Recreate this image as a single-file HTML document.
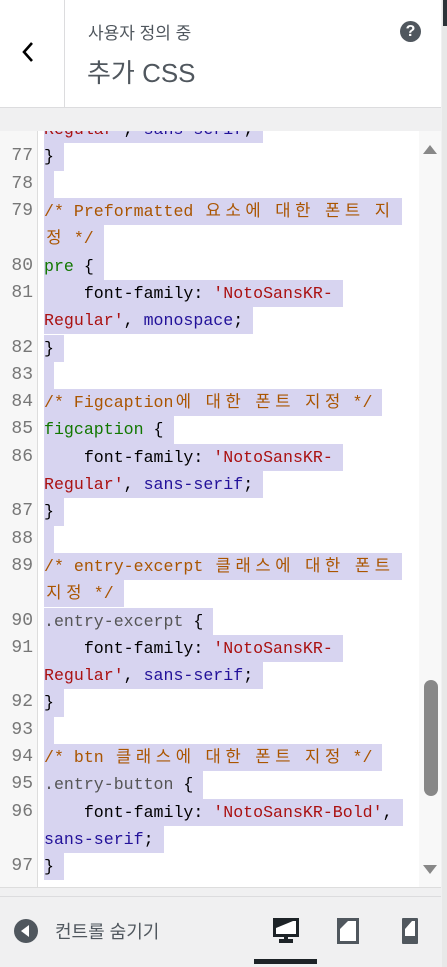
<!DOCTYPE html>
<html><head><meta charset="utf-8"><style>
*{margin:0;padding:0;box-sizing:border-box}
body{width:447px;height:967px;overflow:hidden;background:#f0f0f1;font-family:"Liberation Sans","Noto Sans CJK KR",sans-serif;position:relative}
.hdr{position:absolute;left:0;top:0;width:441px;height:108px;background:#fff;border-bottom:1px solid #dcdcde}
.back{position:absolute;left:0;top:0;width:65px;height:107px;border-right:1px solid #dcdcde}
.sub{position:absolute;left:88px;top:19px;font-size:17px;color:#50575e}
.ttl{position:absolute;left:87px;top:53px;font-size:26px;color:#50575e}
.help{position:absolute;left:400px;top:21px;width:21px;height:21px;border-radius:50%;background:#50575e;color:#fff;font-weight:bold;font-size:16px;text-align:center;line-height:21px}
.rs{position:absolute;left:442px;top:0;width:5px;height:967px;background:#e8e8e8}
.rs:before{content:"";position:absolute;left:1px;top:0;width:4px;height:26px;background:#2c3338}
.code{position:absolute;left:0;top:131px;width:441px;height:757px;background:#fff;overflow:hidden;border-bottom:1px solid #ddd}
.gut{position:absolute;left:0;top:0;width:38px;height:100%;background:#f7f7f7;border-right:1px solid #ddd}
.track{position:absolute;left:419px;top:0;width:22px;height:100%;background:#f8f8f8}
.thumb{position:absolute;left:424px;top:549px;width:14px;height:116px;background:#888;border-radius:7px}
.row{position:absolute;left:0;height:27.3px;width:419px;font-family:"Liberation Mono","Noto Sans CJK KR",monospace;font-size:16.6px;line-height:27.3px;white-space:pre}
.ln{position:absolute;left:0;width:33px;text-align:right;color:#777;font-size:18px}
.tx{position:absolute;left:44px;top:0;height:27.3px;background:#d7d4f0;padding-right:10px}
i{font-style:normal;display:inline-block;width:19.9px;text-align:center}
.c{color:#aa5500}.g{color:#117700}.s{color:#aa1111}.b{color:#221199}.q{color:#555}.k{color:#000}
.bar{position:absolute;left:0;top:896px;width:441px;height:71px;background:#f0f0f1;border-top:1px solid #dcdcde}
.hide{position:absolute;left:55px;top:21px;font-size:18px;color:#50575e}
</style></head><body>
<div class="hdr">
 <div class="back"><svg width="65" height="107"><path d="M32 43 L24 52 L32 61" fill="none" stroke="#000" stroke-width="2.6"/></svg></div>
 <div class="sub">사용자 정의 중</div>
 <div class="ttl">추가 CSS</div>
 <div class="help">?</div>
</div>
<div class="rs"></div>
<div class="code">
 <div class="gut"></div>
 <div class="track"></div>
 <svg style="position:absolute;left:422px;top:12px" width="16" height="12"><path d="M1 11 L8 2 L15 11Z" fill="#888"/></svg>
 <svg style="position:absolute;left:422px;top:733px" width="16" height="12"><path d="M1 1 L8 10 L15 1Z" fill="#888"/></svg>
 <div class="thumb"></div>
 <div class="row" style="top:-14.9px"><span class="tx"><span class="s">Regular'</span>, <span class="b">sans-serif</span>;</span></div>
 <div class="row" style="top:12.4px"><span class="ln">77</span><span class="tx">}</span></div>
 <div class="row" style="top:39.7px"><span class="ln">78</span><span class="tx"></span></div>
 <div class="row" style="top:67px"><span class="ln">79</span><span class="tx c">/* Preformatted <i>요</i><i>소</i><i>에</i> <i>대</i><i>한</i> <i>폰</i><i>트</i> <i>지</i></span></div>
 <div class="row" style="top:94.3px"><span class="tx c"><i>정</i> */</span></div>
 <div class="row" style="top:121.6px"><span class="ln">80</span><span class="tx"><span class="g">pre</span> {</span></div>
 <div class="row" style="top:148.9px"><span class="ln">81</span><span class="tx">    font-family: <span class="s">'NotoSansKR-</span></span></div>
 <div class="row" style="top:176.2px"><span class="tx"><span class="s">Regular'</span>, <span class="b">monospace</span>;</span></div>
 <div class="row" style="top:203.5px"><span class="ln">82</span><span class="tx">}</span></div>
 <div class="row" style="top:230.8px"><span class="ln">83</span><span class="tx"></span></div>
 <div class="row" style="top:258.1px"><span class="ln">84</span><span class="tx c">/* Figcaption<i>에</i> <i>대</i><i>한</i> <i>폰</i><i>트</i> <i>지</i><i>정</i> */</span></div>
 <div class="row" style="top:285.4px"><span class="ln">85</span><span class="tx"><span class="g">figcaption</span> {</span></div>
 <div class="row" style="top:312.7px"><span class="ln">86</span><span class="tx">    font-family: <span class="s">'NotoSansKR-</span></span></div>
 <div class="row" style="top:340px"><span class="tx"><span class="s">Regular'</span>, <span class="b">sans-serif</span>;</span></div>
 <div class="row" style="top:367.3px"><span class="ln">87</span><span class="tx">}</span></div>
 <div class="row" style="top:394.6px"><span class="ln">88</span><span class="tx"></span></div>
 <div class="row" style="top:421.9px"><span class="ln">89</span><span class="tx c">/* entry-excerpt <i>클</i><i>래</i><i>스</i><i>에</i> <i>대</i><i>한</i> <i>폰</i><i>트</i></span></div>
 <div class="row" style="top:449.2px"><span class="tx c"><i>지</i><i>정</i> */</span></div>
 <div class="row" style="top:476.5px"><span class="ln">90</span><span class="tx"><span class="q">.entry-excerpt</span> {</span></div>
 <div class="row" style="top:503.8px"><span class="ln">91</span><span class="tx">    font-family: <span class="s">'NotoSansKR-</span></span></div>
 <div class="row" style="top:531.1px"><span class="tx"><span class="s">Regular'</span>, <span class="b">sans-serif</span>;</span></div>
 <div class="row" style="top:558.4px"><span class="ln">92</span><span class="tx">}</span></div>
 <div class="row" style="top:585.7px"><span class="ln">93</span><span class="tx"></span></div>
 <div class="row" style="top:613px"><span class="ln">94</span><span class="tx c">/* btn <i>클</i><i>래</i><i>스</i><i>에</i> <i>대</i><i>한</i> <i>폰</i><i>트</i> <i>지</i><i>정</i> */</span></div>
 <div class="row" style="top:640.3px"><span class="ln">95</span><span class="tx"><span class="q">.entry-button</span> {</span></div>
 <div class="row" style="top:667.6px"><span class="ln">96</span><span class="tx">    font-family: <span class="s">'NotoSansKR-Bold'</span>,</span></div>
 <div class="row" style="top:694.9px"><span class="tx"><span class="b">sans-serif</span>;</span></div>
 <div class="row" style="top:722.2px"><span class="ln">97</span><span class="tx">}</span></div>
</div>
<div class="bar">
 <svg style="position:absolute;left:14px;top:22px" width="24" height="24"><circle cx="12" cy="12" r="12" fill="#50575e"/><path d="M15 6 L7 12 L15 18Z" fill="#fff"/></svg>
 <div class="hide">컨트롤 숨기기</div>
 <svg style="position:absolute;left:273px;top:21px" width="26" height="26"><rect x="1.5" y="1.5" width="23" height="16" fill="#fff" stroke="#1d2327" stroke-width="3"/><path d="M3 3 H20 L3 10Z" fill="#1d2327"/><rect x="11" y="18" width="4" height="4" fill="#1d2327"/><rect x="6" y="21" width="14" height="4" fill="#1d2327"/></svg>
 <svg style="position:absolute;left:337px;top:21px" width="22" height="26"><rect x="1.5" y="1.5" width="19" height="23" fill="#fff" stroke="#50575e" stroke-width="3"/><path d="M3 3 H11 L3 11Z" fill="#50575e"/></svg>
 <svg style="position:absolute;left:402px;top:21px" width="16" height="26"><rect x="0" y="0" width="16" height="26" rx="1" fill="#50575e"/><rect x="3" y="3" width="10" height="15" fill="#fff"/><path d="M3 3 H10 L3 11Z" fill="#50575e"/></svg>
 <div style="position:absolute;left:254px;top:62px;width:63px;height:5px;background:#1d2327"></div>
</div>
</body></html>
